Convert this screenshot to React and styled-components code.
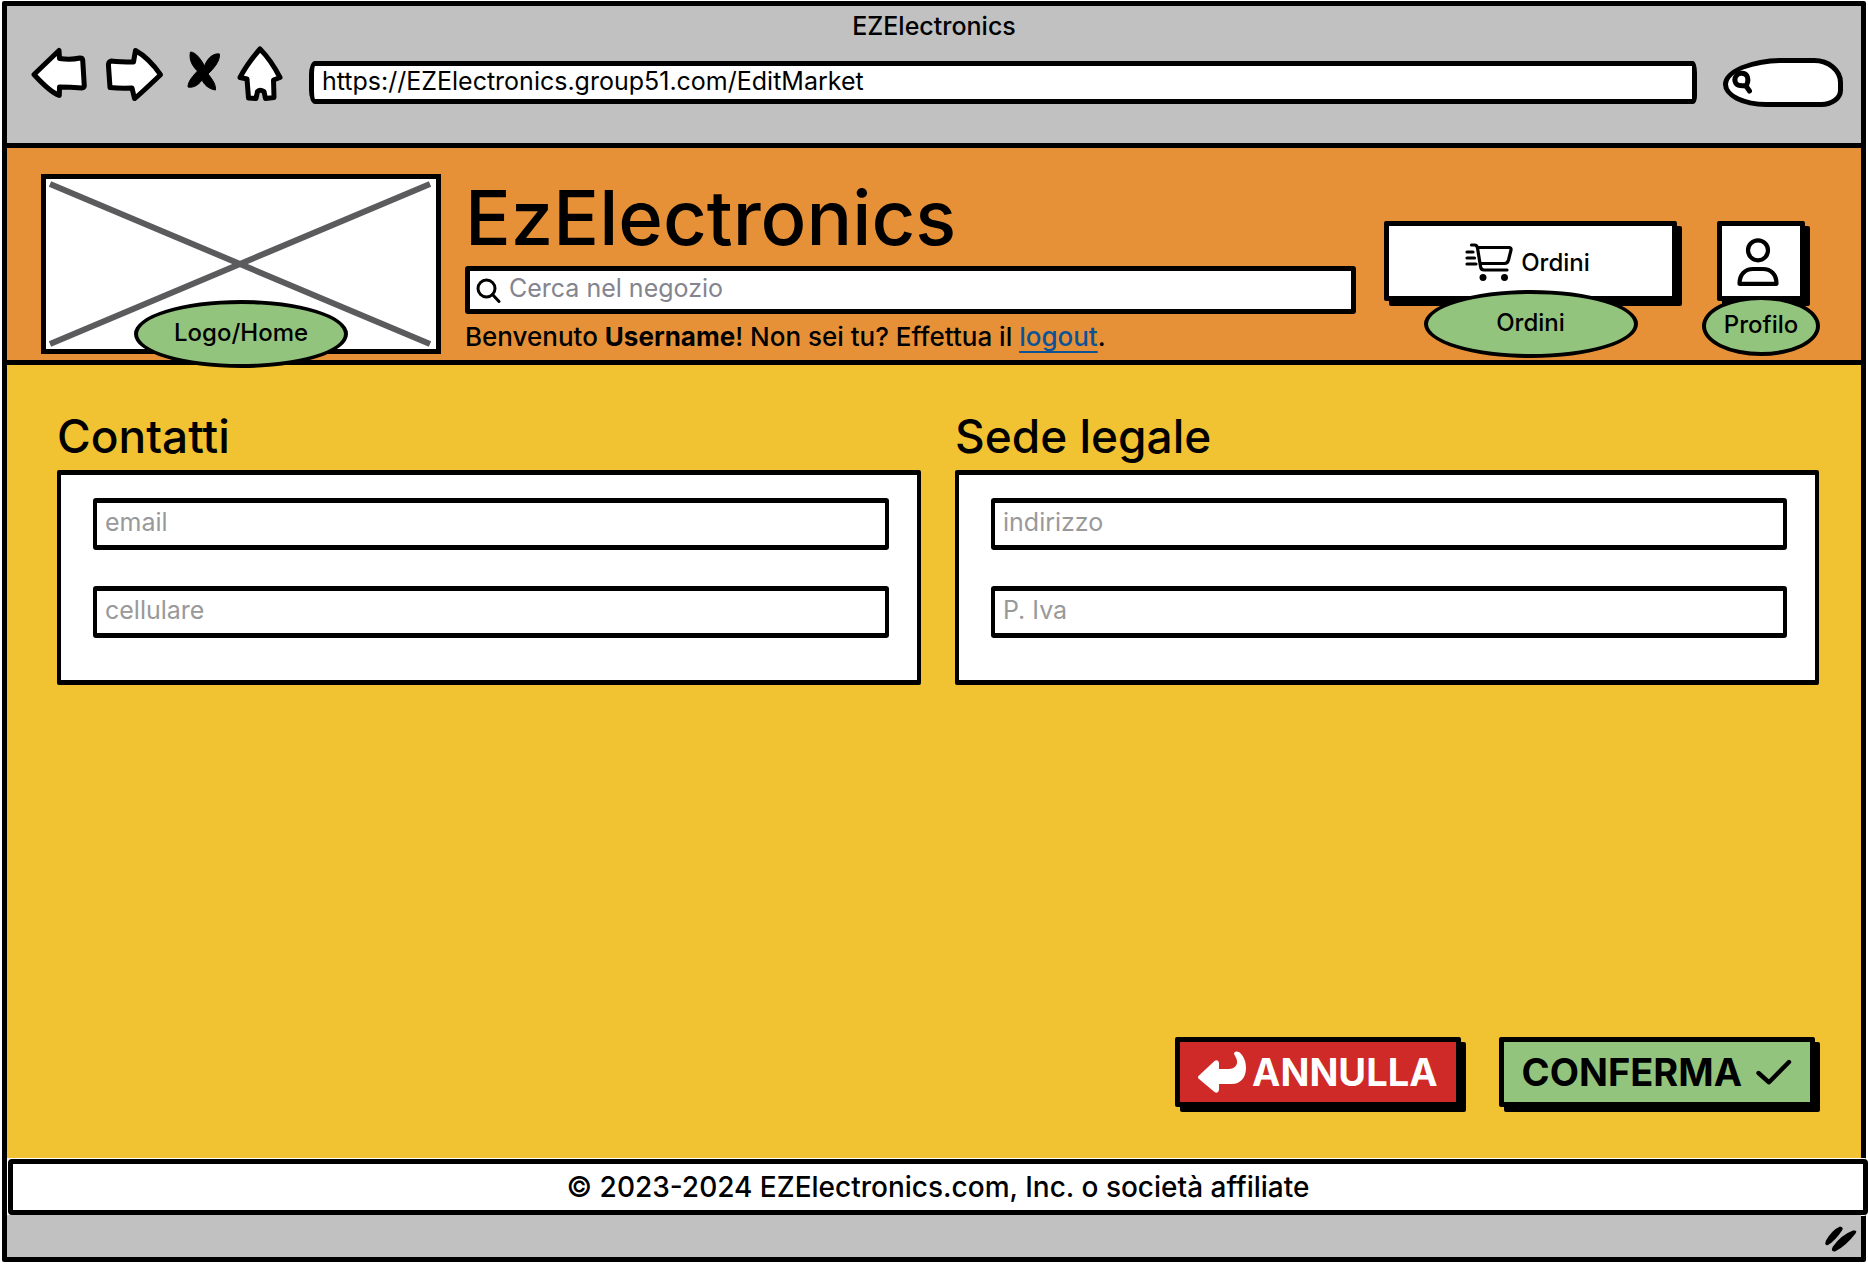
import React from "react";
import styled, { createGlobalStyle } from "styled-components";

const color = {
  ink: "#000",
  paper: "#fff",
  chrome: "#c1c1c1",
  header: "#e69138",
  page: "#f1c232",
  green: "#93c47d",
  red: "#cf2a27",
  link: "#0b5394",
  cross: "#5b5b5d",
  hint: "#999",
  searchHint: "#84848f",
};

const GlobalStyle = createGlobalStyle`
  *, *::before, *::after { box-sizing: border-box; }
  body {
    margin: 0;
    background: ${color.paper};
    color: ${color.ink};
    font-family: Inter, "Open Sans", sans-serif;
    font-size: 25px;
    font-weight: 500;
  }
  input, button { font: inherit; color: inherit; }
  input { font-weight: 400; }
`;

const Frame = styled.div`
  display: flex;
  flex-direction: column;
  min-height: calc(100vh - 3px);
  margin: 1px 2px 2px;
  border: 5px solid ${color.ink};
  border-radius: 2px;
`;

const Chrome = styled.div`
  padding-bottom: 25px;
  border-bottom: 5px solid ${color.ink};
  background: ${color.chrome};
`;

const WindowTitle = styled.div`
  line-height: 40px;
  text-align: center;
`;

const Toolbar = styled.div`
  display: flex;
  align-items: center;
  gap: 26px;
  height: 72px;
  padding: 0 18px 0 24px;
`;

const NavButtons = styled.nav`
  display: flex;
  align-self: flex-start;
  gap: 8px;
`;

const NavButton = styled.button`
  display: block;
  padding: 0;
  border: 0;
  background: none;
  cursor: pointer;

  svg {
    display: block;
    fill: ${(p) => (p.$solid ? color.ink : color.paper)};
    stroke: ${color.ink};
    stroke-width: ${(p) => (p.$solid ? 1 : 5)};
    stroke-linejoin: round;
  }
`;

const AddressForm = styled.form`
  flex: 1;
  display: flex;
`;

const AddressInput = styled.input`
  flex: 1;
  min-width: 0;
  height: 43px;
  padding: 0 8px 2px;
  border: 5px solid ${color.ink};
  border-radius: 6px 4px 4px 6px / 14px 12px 8px 14px;
  background: ${color.paper};
  outline: none;
`;

const QuickSearch = styled.form`
  display: flex;
  align-items: center;
  width: 120px;
  height: 49px;
  padding-left: 4px;
  border: 5px solid ${color.ink};
  border-radius: 50% 24% 18% 36% / 54% 50% 34% 46%;
  background: ${color.paper};

  svg { flex: none; }
`;

const QuickInput = styled.input`
  flex: 1;
  min-width: 0;
  height: 32px;
  padding: 0 4px;
  border: 0;
  background: none;
  outline: none;
`;

const Header = styled.header`
  display: grid;
  grid-template-columns: 400px minmax(0, 1fr) auto;
  column-gap: 24px;
  align-items: start;
  padding: 26px 56px 0 34px;
  border-bottom: 5px solid ${color.ink};
  background: ${color.header};
`;

const LogoLink = styled.a`
  position: relative;
  display: block;
  height: 180px;
  border: 5px solid ${color.ink};
  background: ${color.paper};
  color: inherit;
  text-decoration: none;

  > svg {
    display: block;
    width: 100%;
    height: 100%;
    stroke: ${color.cross};
    stroke-width: 6;
  }
`;

const Badge = styled.span`
  position: absolute;
  left: 50%;
  bottom: ${(p) => p.$bottom}px;
  display: flex;
  align-items: center;
  justify-content: center;
  width: ${(p) => p.$width}px;
  height: ${(p) => p.$height}px;
  padding-bottom: 4px;
  border: 4px solid ${color.ink};
  border-radius: 50%;
  background: ${color.green};
  font-size: 24px;
  transform: translateX(-50%);
`;

const StoreTitle = styled.h1`
  margin: 0 0 6px;
  font-size: 76px;
  font-weight: 500;
  line-height: 86px;
`;

const StoreSearch = styled.form`
  display: flex;
  align-items: center;
  gap: 8px;
  height: 48px;
  padding-left: 6px;
  border: 5px solid ${color.ink};
  border-radius: 3px;
  background: ${color.paper};

  svg { flex: none; }
`;

const StoreSearchInput = styled.input`
  flex: 1;
  min-width: 0;
  height: 38px;
  padding: 0 0 4px;
  border: 0;
  background: none;
  outline: none;

  &::placeholder { color: ${color.searchHint}; opacity: 1; }
`;

const Welcome = styled.p`
  margin: 0;
  font-size: 26px;
  line-height: 46px;

  a {
    color: ${color.link};
    text-decoration-thickness: 2px;
    text-underline-offset: 5px;
    text-decoration-skip-ink: none;
  }
`;

const Shortcuts = styled.div`
  display: flex;
  gap: 40px;
  padding: 47px 0 0 4px;
`;

const Shortcut = styled.div`
  position: relative;
`;

const SketchButton = styled.button`
  display: flex;
  align-items: center;
  justify-content: center;
  border: 5px solid ${color.ink};
  border-radius: 2px;
  box-shadow: 5px 5px 0 ${color.ink};
  cursor: pointer;

  svg { flex: none; }
`;

const ShortcutButton = styled(SketchButton)`
  gap: 8px;
  width: ${(p) => p.$width}px;
  height: 80px;
  padding: 2px 6px 0 0;
  background: ${color.paper};
  font-size: 24px;
`;

const Main = styled.main`
  flex: 1;
  display: flex;
  flex-direction: column;
  background: ${color.page};
`;

const EditForm = styled.form`
  flex: 1;
  display: flex;
  flex-direction: column;
  padding: 43px 42px 51px 50px;
`;

const Sections = styled.div`
  display: grid;
  grid-template-columns: repeat(2, minmax(0, 1fr));
  gap: 34px;
`;

const SectionTitle = styled.h2`
  margin: 0 0 6px;
  font-size: 46px;
  font-weight: 500;
  line-height: 56px;
`;

const Panel = styled.div`
  display: flex;
  flex-direction: column;
  gap: 36px;
  padding: 23px 28px 42px 32px;
  border: solid ${color.ink};
  border-width: 5px 4px;
  border-radius: 2px;
  background: ${color.paper};
`;

const Field = styled.input`
  display: block;
  width: 100%;
  height: 52px;
  padding: 0 8px 5px;
  border: solid ${color.ink};
  border-width: 5px 4px;
  border-radius: 3px;
  background: ${color.paper};
  outline: none;

  &::placeholder { color: ${color.hint}; opacity: 1; }
`;

const FormActions = styled.div`
  display: flex;
  justify-content: flex-end;
  gap: 38px;
  margin-top: auto;
  padding: 48px 4px 0;
`;

const ActionButton = styled(SketchButton)`
  gap: ${(p) => p.$gap}px;
  height: 70px;
  padding: 0 18px;
  background: ${(p) => p.$fill};
  color: ${(p) => p.$text};
  font-size: 38px;
  font-weight: 700;
`;

const Footer = styled.footer`
  margin: 1px -7px 0 1px;
  border: 5px solid ${color.ink};
  border-radius: 4px;
  background: ${color.paper};
  box-shadow: 0 0 0 1px ${color.paper};
  font-size: 28px;
  line-height: 46px;
  text-align: center;
`;

const StatusBar = styled.div`
  display: flex;
  align-items: center;
  justify-content: flex-end;
  height: 42px;
  padding: 6px 4px 0 0;
  background: ${color.chrome};
`;

const SearchIcon = () => (
  <svg width="25" height="25" viewBox="0 0 25 25" fill="none" stroke="#000" strokeWidth="3" strokeLinecap="round" aria-hidden="true">
    <circle cx="10.5" cy="10.5" r="8.5" />
    <path d="M16.5 16.5 L23 23.5" />
  </svg>
);

const QuickSearchIcon = () => (
  <svg width="20" height="24" viewBox="0 0 20 24" fill="none" stroke="#000" strokeWidth="5" strokeLinecap="round" aria-hidden="true">
    <path d="M4.5 5.5 C7 2.5 13 2.5 15 6 C17 10 15 15 14 15.5 C10 16 6 16 4 13.5 C2.5 11 2.5 8 4.5 5.5 Z" />
    <path d="M14 16 L17.5 21" />
  </svg>
);

const CartIcon = () => (
  <svg width="48" height="38" viewBox="0 0 48 38" fill="none" stroke="#000" strokeWidth="3.2" strokeLinecap="round" strokeLinejoin="round" aria-hidden="true">
    <path d="M6.5 2 H9.5 Q12 2 12.5 5 L15.5 23.5 Q16 27 19 27 H42" />
    <path d="M13 4.5 H44 Q46.5 4.5 46 7 L43.5 17 Q42.5 20.5 39.5 20.5 H16" />
    <path d="M2 9 H8 M2 15 H9.5 M2 21 H11" />
    <circle cx="18" cy="34.5" r="1.9" fill="#000" />
    <circle cx="39.5" cy="34.5" r="1.9" fill="#000" />
  </svg>
);

const UserIcon = () => (
  <svg width="42" height="48" viewBox="0 0 42 48" fill="none" stroke="#000" strokeWidth="4.2" strokeLinejoin="round" aria-hidden="true">
    <circle cx="21" cy="12.3" r="10" />
    <path d="M2.5 45.8 C2.5 36 8.5 31 16 31 H26 C33.5 31 39.5 36 39.5 45.8 Z" />
  </svg>
);

const BackArrowIcon = () => (
  <svg width="48" height="42" viewBox="0 0 48 42" fill="#fff" aria-hidden="true">
    <path d="M1 24.5 L16.5 10 Q20.5 8 21 12 V18 H31 C38 18 42 12 36.5 4 C35 1 38 -0.5 41 1 C46 5 48 11 48 17 C48 27 42 33 34 33 H21 V39 Q20 43 16.5 41 L1 28 Q-1 26.2 1 24.5 Z" />
  </svg>
);

const CheckIcon = () => (
  <svg width="36" height="26" viewBox="0 0 36 26" fill="none" stroke="#000" strokeWidth="4.4" strokeLinecap="round" strokeLinejoin="round" aria-hidden="true">
    <path d="M2.5 14 L13 23.3 L33 3" />
  </svg>
);

const GripIcon = () => (
  <svg width="32" height="26" viewBox="0 0 32 26" aria-hidden="true">
    <path d="M15 0.5 Q19 1 17 4.5 Q10 15 3 19 Q-1 20 1 14.5 Q7 4 15 0.5 Z" />
    <path d="M28 4.5 Q33 4 30.5 7.5 Q21 20 10 25.5 Q5 26 8 20.5 Q16 9 28 4.5 Z" />
  </svg>
);

const navItems = [
  { label: "Indietro", width: 66, box: "31 46 66 56", d: "M34 74.5 L59 50.5 L59.5 58.5 Q71 60 80 58 Q82.5 58 82.7 60 L84.3 86 Q84 88 82 88 Q70 87 59.5 87 L59.3 95.5 Q50 92 34 74.5 Z" },
  { label: "Avanti", width: 68, box: "105 46 68 56", d: "M111 61 Q108 62 108.5 66 L110 87.5 Q120 88.5 132 88 L134.5 98.5 Q137 97 160.5 74.7 Q149 58 135.5 50.5 L133.5 62 Q120 62 111 61 Z" },
  { label: "Interrompi", width: 46, box: "181 46 46 56", solid: true, d: "M190.5 52 C196 52 202 61 204.5 66 C208 57 214 53 219.5 54 C220 62 213 69 208 74 C213 80 216 85 215.5 90 C208 89 204 84 202 80 C198 86 192 88 188 87 C188 81 193 76 197.5 71 C191 65 189 58 190.5 52 Z" },
  { label: "Home", width: 48, box: "235 46 48 56", d: "M260 49 Q271 60 280 77.5 L273.5 80 L274 97.5 L265.5 98.5 L264 91.5 Q260 89 257.5 91.5 L256 98.5 L248.5 98 L247 79 L240 77.5 Q247 64 260 49 Z" },
];

const sections = [
  { title: "Contatti", fields: [{ id: "email", hint: "email", type: "email" }, { id: "cellulare", hint: "cellulare", type: "tel" }] },
  { title: "Sede legale", fields: [{ id: "indirizzo", hint: "indirizzo", type: "text" }, { id: "piva", hint: "P. Iva", type: "text" }] },
];

export default function App() {
  return (
    <Frame>
      <GlobalStyle />
      <Chrome>
        <WindowTitle>EZElectronics</WindowTitle>
        <Toolbar>
          <NavButtons>
            {navItems.map((item) => (
              <NavButton key={item.label} type="button" aria-label={item.label} $solid={item.solid}>
                <svg width={item.width} height="56" viewBox={item.box} aria-hidden="true">
                  <path d={item.d} />
                </svg>
              </NavButton>
            ))}
          </NavButtons>
          <AddressForm>
            <AddressInput type="text" aria-label="Indirizzo web" defaultValue="https://EZElectronics.group51.com/EditMarket" />
          </AddressForm>
          <QuickSearch>
            <QuickSearchIcon />
            <QuickInput type="text" aria-label="Cerca" />
          </QuickSearch>
        </Toolbar>
      </Chrome>

      <Header>
        <LogoLink href="#home">
          <svg viewBox="0 0 390 170" preserveAspectRatio="none" aria-hidden="true">
            <path d="M4 5 L384 165 M384 5 L4 165" />
          </svg>
          <Badge $width={214} $height={68} $bottom={-19}>Logo/Home</Badge>
        </LogoLink>
        <div>
          <StoreTitle>EzElectronics</StoreTitle>
          <StoreSearch>
            <SearchIcon />
            <StoreSearchInput type="text" aria-label="Cerca nel negozio" placeholder="Cerca nel negozio" />
          </StoreSearch>
          <Welcome>
            Benvenuto <strong>Username</strong>! Non sei tu? Effettua il <a href="#logout">logout</a>.
          </Welcome>
        </div>
        <Shortcuts>
          <Shortcut>
            <ShortcutButton type="button" $width={293}>
              <CartIcon />
              Ordini
            </ShortcutButton>
            <Badge $width={214} $height={68} $bottom={-57}>Ordini</Badge>
          </Shortcut>
          <Shortcut>
            <ShortcutButton type="button" aria-label="Profilo" $width={88}>
              <UserIcon />
            </ShortcutButton>
            <Badge $width={118} $height={60} $bottom={-55}>Profilo</Badge>
          </Shortcut>
        </Shortcuts>
      </Header>

      <Main>
        <EditForm>
          <Sections>
            {sections.map((section) => (
              <section key={section.title}>
                <SectionTitle>{section.title}</SectionTitle>
                <Panel>
                  {section.fields.map((field) => (
                    <Field key={field.id} id={field.id} type={field.type} aria-label={field.hint} placeholder={field.hint} />
                  ))}
                </Panel>
              </section>
            ))}
          </Sections>
          <FormActions>
            <ActionButton type="button" $gap={6} $fill={color.red} $text={color.paper}>
              <BackArrowIcon />
              ANNULLA
            </ActionButton>
            <ActionButton type="submit" $gap={14} $fill={color.green} $text={color.ink}>
              CONFERMA
              <CheckIcon />
            </ActionButton>
          </FormActions>
        </EditForm>
      </Main>

      <Footer>© 2023-2024 EZElectronics.com, Inc. o società affiliate</Footer>
      <StatusBar>
        <GripIcon />
      </StatusBar>
    </Frame>
  );
}
